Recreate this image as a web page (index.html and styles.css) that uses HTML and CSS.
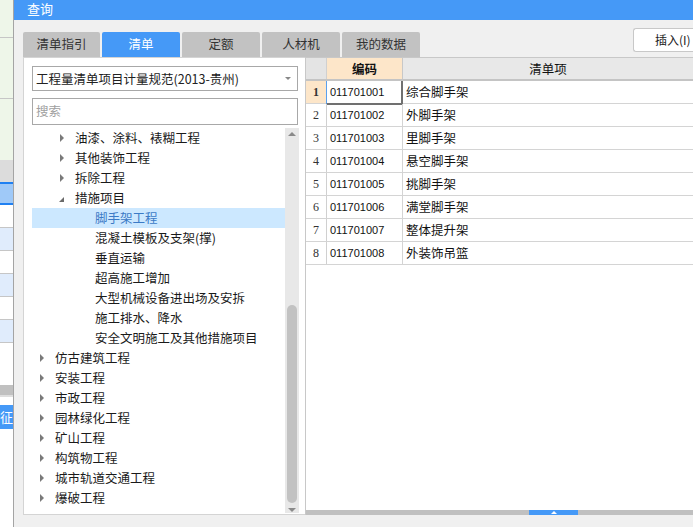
FILE: index.html
```html
<!DOCTYPE html>
<html lang="zh">
<head>
<meta charset="utf-8">
<title>查询</title>
<link rel="stylesheet" href="styles.css">
</head>
<body>
<div class="side">
  <div class="s s-g1"></div>
  <div class="s s-g2"></div>
  <div class="s s-g3"></div>
  <div class="s s-grey"></div>
  <div class="s s-sel"></div>
  <div class="s s-w"></div>
  <div class="s s-lb"></div>
  <div class="s s-w"></div>
  <div class="s s-lb"></div>
  <div class="s s-w"></div>
  <div class="s s-lb"></div>
  <div class="s s-w2"></div>
  <div class="s s-bar"></div>
  <div class="s s-gap"></div>
  <div class="s s-blue">征</div>
  <div class="s s-rest"></div>
</div>
<div class="dialog">
  <div class="titlebar"><span class="title-text">查询</span></div>
  <div class="toolbar">
    <div class="tabs">
      <div class="tab">清单指引</div>
      <div class="tab active">清单</div>
      <div class="tab">定额</div>
      <div class="tab">人材机</div>
      <div class="tab">我的数据</div>
    </div>
    <div class="insert-btn">插入(I)</div>
  </div>
  <div class="main">
    <div class="left">
      <div class="select">
        <span>工程量清单项目计量规范(2013-贵州)</span>
        <span class="caret"></span>
      </div>
      <div class="search">搜索</div>
      <div class="tree-wrap">
        <div class="tree">
          <div class="node l1"><span class="arr"></span>油漆、涂料、裱糊工程</div>
          <div class="node l1"><span class="arr"></span>其他装饰工程</div>
          <div class="node l1"><span class="arr"></span>拆除工程</div>
          <div class="node l1"><span class="arr open"></span>措施项目</div>
          <div class="node l2 selected">脚手架工程</div>
          <div class="node l2">混凝土模板及支架(撑)</div>
          <div class="node l2">垂直运输</div>
          <div class="node l2">超高施工增加</div>
          <div class="node l2">大型机械设备进出场及安拆</div>
          <div class="node l2">施工排水、降水</div>
          <div class="node l2">安全文明施工及其他措施项目</div>
          <div class="node l0"><span class="arr"></span>仿古建筑工程</div>
          <div class="node l0"><span class="arr"></span>安装工程</div>
          <div class="node l0"><span class="arr"></span>市政工程</div>
          <div class="node l0"><span class="arr"></span>园林绿化工程</div>
          <div class="node l0"><span class="arr"></span>矿山工程</div>
          <div class="node l0"><span class="arr"></span>构筑物工程</div>
          <div class="node l0"><span class="arr"></span>城市轨道交通工程</div>
          <div class="node l0"><span class="arr"></span>爆破工程</div>
        </div>
        <div class="vscroll">
          <span class="up"></span>
          <span class="thumb"></span>
          <span class="down"></span>
        </div>
      </div>
    </div>
    <div class="grid">
      <div class="row head">
        <div class="c num"></div>
        <div class="c code">编码</div>
        <div class="c item">清单项</div>
      </div>
      <div class="row first">
        <div class="c num">1</div>
        <div class="c code cur">011701001</div>
        <div class="c item">综合脚手架</div>
      </div>
      <div class="row">
        <div class="c num">2</div>
        <div class="c code">011701002</div>
        <div class="c item">外脚手架</div>
      </div>
      <div class="row">
        <div class="c num">3</div>
        <div class="c code">011701003</div>
        <div class="c item">里脚手架</div>
      </div>
      <div class="row">
        <div class="c num">4</div>
        <div class="c code">011701004</div>
        <div class="c item">悬空脚手架</div>
      </div>
      <div class="row">
        <div class="c num">5</div>
        <div class="c code">011701005</div>
        <div class="c item">挑脚手架</div>
      </div>
      <div class="row">
        <div class="c num">6</div>
        <div class="c code">011701006</div>
        <div class="c item">满堂脚手架</div>
      </div>
      <div class="row">
        <div class="c num">7</div>
        <div class="c code">011701007</div>
        <div class="c item">整体提升架</div>
      </div>
      <div class="row">
        <div class="c num">8</div>
        <div class="c code">011701008</div>
        <div class="c item">外装饰吊篮</div>
      </div>
      <div class="grid-fill"></div>
      <div class="hscroll"><span class="hthumb"><span class="hup"></span></span></div>
    </div>
  </div>
  <div class="footer"></div>
</div>
</body>
</html>
```

FILE: styles.css
```css
* { box-sizing: border-box; }
html, body { margin: 0; padding: 0; }
body {
  width: 693px;
  height: 527px;
  overflow: hidden;
  display: flex;
  font-family: "Noto Sans CJK SC", "Liberation Sans", sans-serif;
  font-size: 12px;
  color: #222;
  background: #f0f0f0;
}

/* left strip of the underlying window */
.side {
  width: 14px;
  flex: none;
  display: flex;
  flex-direction: column;
  border-right: 1px solid #a4a4a4;
  background: #fff;
}
.s { flex: none; }
.s-g1 { height: 38px; background: #eef6e9; border-bottom: 1px solid #c6c6c6; }
.s-g2 { height: 61px; background: #eef6e9; border-bottom: 1px solid #c6c6c6; }
.s-g3 { height: 61px; background: #eef6e9; }
.s-grey { height: 22px; background: #dcdcdc; }
.s-sel { height: 23px; background: #9fc9f8; border-top: 2px solid #1f80f2; border-bottom: 2px solid #1f80f2; }
.s-w { height: 23px; background: #fff; border-bottom: 1px solid #c6c6c6; }
.s-lb { height: 23px; background: #e0ecfc; border-bottom: 1px solid #c6c6c6; }
.s-w2 { height: 42px; background: #fff; }
.s-bar { height: 12px; background: #c0c0c0; border-bottom: 2px solid #dedede; }
.s-gap { height: 8px; background: #fff; }
.s-blue {
  height: 24px;
  background: #4599f7;
  color: #fff;
  font-size: 13px;
  line-height: 24px;
  text-align: right;
  white-space: nowrap;
  overflow: hidden;
  direction: rtl;
}
.s-rest { flex: 1; background: #fff; }

/* dialog */
.dialog {
  flex: 1;
  display: flex;
  flex-direction: column;
  min-width: 0;
  background: #f0f0f0;
}
.titlebar {
  height: 20px;
  flex: none;
  background: #4599f7;
  color: #fff;
  font-size: 13px;
  line-height: 17px;
  padding-left: 13px;
}
.toolbar {
  height: 37px;
  flex: none;
  display: flex;
  justify-content: space-between;
  align-items: flex-start;
  padding-left: 9px;
}
.tabs {
  display: flex;
  gap: 2px;
  margin-top: 12px;
}
.tab {
  width: 78px;
  height: 25px;
  background: #c2c2c2;
  color: #333;
  border-radius: 2px 2px 0 0;
  text-align: center;
  line-height: 24px;
  font-size: 12.5px;
}
.tab:first-child { width: 77px; }
.tab.active { background: #4599f7; color: #fff; }
.insert-btn {
  margin-top: 8px;
  width: 60px;
  height: 24px;
  background: #fff;
  border: 1px solid #c8c8c8;
  border-right: none;
  border-radius: 3px 0 0 3px;
  line-height: 21px;
  padding-left: 21px;
  font-size: 12px;
  color: #222;
  white-space: nowrap;
}

.main {
  height: 458px;
  flex: none;
  display: flex;
  margin-left: 9px;
}

/* left panel */
.left {
  width: 282px;
  flex: none;
  background: #fff;
  border: 1px solid #d4d4d4;
  border-right: none;
  display: flex;
  flex-direction: column;
  padding: 8px 0 0 8px;
}
.select {
  width: 266px;
  height: 25px;
  border: 1px solid #a8a8a8;
  display: flex;
  align-items: center;
  justify-content: space-between;
  padding: 0 6px 0 3px;
  font-size: 12.5px;
  color: #222;
}
.caret {
  width: 0;
  height: 0;
  border-left: 3px solid transparent;
  border-right: 3px solid transparent;
  border-top: 3px solid #888;
}
.search {
  margin-top: 7px;
  width: 266px;
  height: 27px;
  border: 1px solid #a8a8a8;
  color: #a0a0a0;
  line-height: 24px;
  padding-left: 3px;
  font-size: 12.5px;
}
.tree-wrap {
  margin-top: 3px;
  display: flex;
  height: 385px;
}
.tree {
  width: 253px;
  flex: none;
  overflow: hidden;
}
.node {
  height: 20px;
  line-height: 20px;
  white-space: nowrap;
  position: relative;
  font-size: 12.5px;
  color: #1a1a1a;
}
.node.l0 { padding-left: 23px; }
.node.l1 { padding-left: 43px; }
.node.l2 { padding-left: 63px; }
.node.selected { background: #cce8ff; color: #3b7ac6; }
.arr {
  position: absolute;
  top: 6px;
  width: 0;
  height: 0;
  border-top: 4px solid transparent;
  border-bottom: 4px solid transparent;
  border-left: 4px solid #7a7a7a;
}
.l0 .arr { left: 8px; }
.l1 .arr { left: 28px; }
.arr.open {
  top: 9px;
  left: 27px;
  border: none;
  border-left: 5px solid transparent;
  border-bottom: 5px solid #6a6a6a;
}
.vscroll {
  width: 14px;
  flex: none;
  background: #e8e8e8;
  display: flex;
  flex-direction: column;
  align-items: center;
}
.up {
  margin-top: 4px;
  width: 0;
  height: 0;
  border-left: 4px solid transparent;
  border-right: 4px solid transparent;
  border-bottom: 4px solid #8a8a8a;
}
.thumb {
  margin-top: 169px;
  width: 10px;
  height: 198px;
  background: #c2c2c2;
  border-radius: 5px;
}
.down {
  margin-top: 5px;
  width: 0;
  height: 0;
  border-left: 4px solid transparent;
  border-right: 4px solid transparent;
  border-top: 4px solid #8a8a8a;
}

/* grid */
.grid {
  flex: 1;
  min-width: 0;
  background: #fff;
  border-left: 1px solid #c8c8c8;
  display: flex;
  flex-direction: column;
  overflow: hidden;
}
.row {
  display: flex;
  height: 23px;
  flex: none;
  border-bottom: 1px solid #d4d4d4;
}
.c {
  height: 100%;
  line-height: 22px;
  white-space: nowrap;
  flex: none;
}
.num {
  width: 21px;
  border-right: 1px solid #d0d0d0;
  text-align: center;
  font-family: "Liberation Serif", "DejaVu Serif", serif;
  font-size: 12px;
  color: #333;
}
.code {
  width: 76px;
  border-right: 1px solid #d4d4d4;
  padding-left: 3px;
  font-family: "Liberation Sans", Arial, sans-serif;
  font-size: 11px;
  color: #111;
}
.item {
  flex: 1;
  padding-left: 3px;
  font-size: 12.5px;
  color: #111;
}
.row.head {
  height: 24px;
  border-top: 1px solid #c8c8c8;
  border-bottom: 2px solid #c4c4c4;
  background: #e8e8e8;
}
.head .num { background: #e4e4e4; border-right: 1px solid #d0d0d0; }
.head .code {
  background: #fde6c9;
  font-family: "Noto Sans CJK SC", sans-serif;
  font-weight: bold;
  font-size: 12.5px;
  text-align: center;
  padding-left: 0;
  border-right: 1px solid #c8c8c8;
}
.head .item { text-align: center; padding-left: 0; line-height: 21px; }
.first .num { background: #fde6c9; font-weight: bold; }
.code.cur {
  border-left: 1px solid #5aa0ee;
  border-right: 2px solid #707070;
  border-bottom: 2px solid #707070;
  height: 24px;
  margin-left: -1px;
  width: 77px;
  padding-left: 3px;
}
.grid-fill { flex: 1; background: #fff; }
.hscroll {
  height: 5px;
  flex: none;
  background: #c0c0c0;
  padding-left: 223px;
}
.hthumb {
  display: flex;
  justify-content: center;
  align-items: flex-end;
  width: 49px;
  height: 5px;
  background: #4599f7;
}
.hup {
  width: 0;
  height: 0;
  margin-bottom: 1px;
  border-left: 3px solid transparent;
  border-right: 3px solid transparent;
  border-bottom: 3px solid #fff;
}
.footer { flex: 1; background: #f0f0f0; }
```
